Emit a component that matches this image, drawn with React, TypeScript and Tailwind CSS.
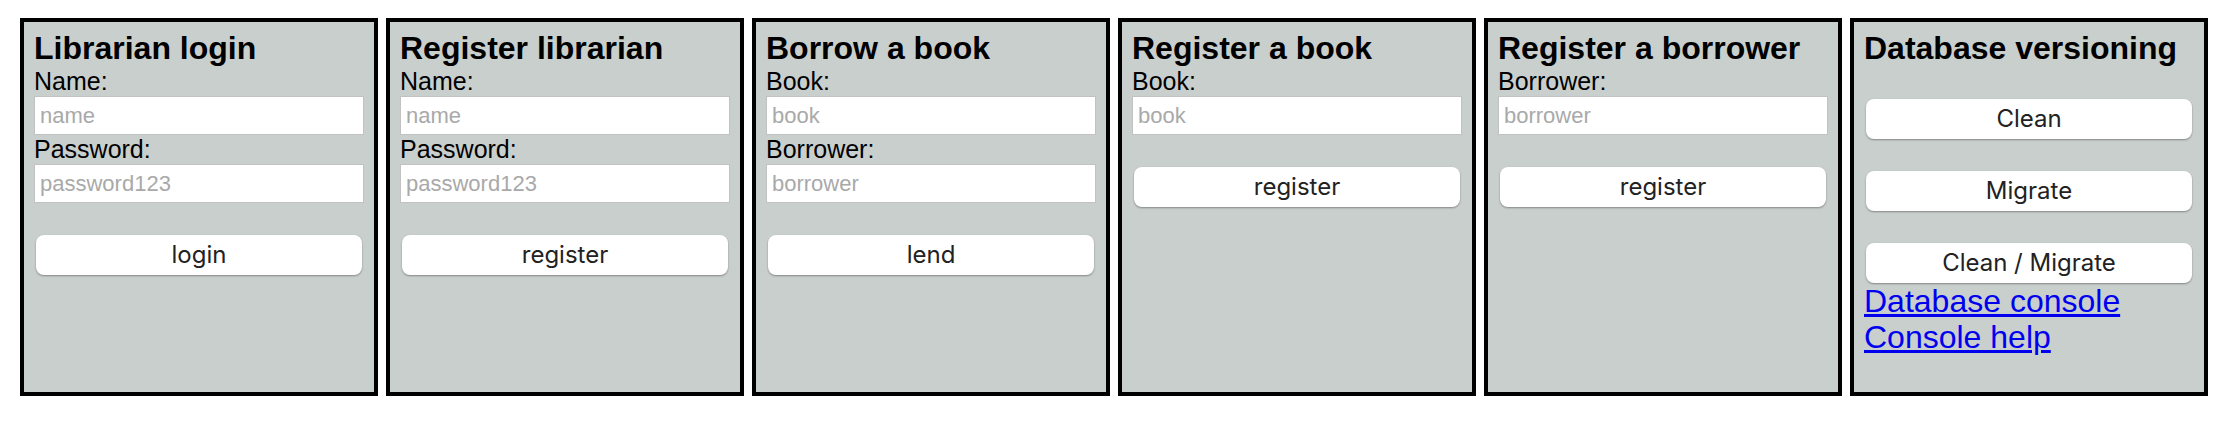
type Field = {
  label: string;
  placeholder: string;
};

type Panel = {
  title: string;
  fields: Field[];
  action: string;
};

const panels: Panel[] = [
  {
    title: "Librarian login",
    fields: [
      { label: "Name:", placeholder: "name" },
      { label: "Password:", placeholder: "password123" },
    ],
    action: "login",
  },
  {
    title: "Register librarian",
    fields: [
      { label: "Name:", placeholder: "name" },
      { label: "Password:", placeholder: "password123" },
    ],
    action: "register",
  },
  {
    title: "Borrow a book",
    fields: [
      { label: "Book:", placeholder: "book" },
      { label: "Borrower:", placeholder: "borrower" },
    ],
    action: "lend",
  },
  {
    title: "Register a book",
    fields: [{ label: "Book:", placeholder: "book" }],
    action: "register",
  },
  {
    title: "Register a borrower",
    fields: [{ label: "Borrower:", placeholder: "borrower" }],
    action: "register",
  },
];

function Button({ children }: { children: string }) {
  return (
    <button
      type="button"
      className="mt-8 ml-[2px] block h-[40px] w-[326px] rounded-[8px] bg-white font-['Inter',sans-serif] text-[24px] text-[#222] shadow-[0_1px_2px_rgba(0,0,0,0.35)]"
    >
      {children}
    </button>
  );
}

function Box({ title, children }: { title: string; children: React.ReactNode }) {
  return (
    <div className="h-[378px] w-[358px] shrink-0 border-4 border-black bg-[#c9cfcd] pt-2 pl-[10px]">
      <h2 className="text-[32px] leading-[37px] font-bold text-black">{title}</h2>
      {children}
    </div>
  );
}

export default function App() {
  return (
    <div className="flex gap-2 bg-white px-5 pt-[18px] pb-[26px] font-['Liberation_Sans',Arial,sans-serif]">
      {panels.map((panel) => (
        <Box key={panel.title} title={panel.title}>
          {panel.fields.map((field) => (
            <div key={field.label}>
              <p className="text-[25px] leading-[29px] text-black">{field.label}</p>
              <input
                type="text"
                placeholder={field.placeholder}
                className="block h-[39px] w-[330px] border border-[#c2c2c2] bg-white px-[5px] text-[22px] text-black outline-none placeholder:text-[#a9a9a9]"
              />
            </div>
          ))}
          <Button>{panel.action}</Button>
        </Box>
      ))}
      <Box title="Database versioning">
        <Button>Clean</Button>
        <Button>Migrate</Button>
        <Button>Clean / Migrate</Button>
        <a href="#" className="block text-[32px] leading-[36px] text-[#0000ee] underline">
          Database console
        </a>
        <a href="#" className="block text-[32px] leading-[36px] text-[#0000ee] underline">
          Console help
        </a>
      </Box>
    </div>
  );
}
